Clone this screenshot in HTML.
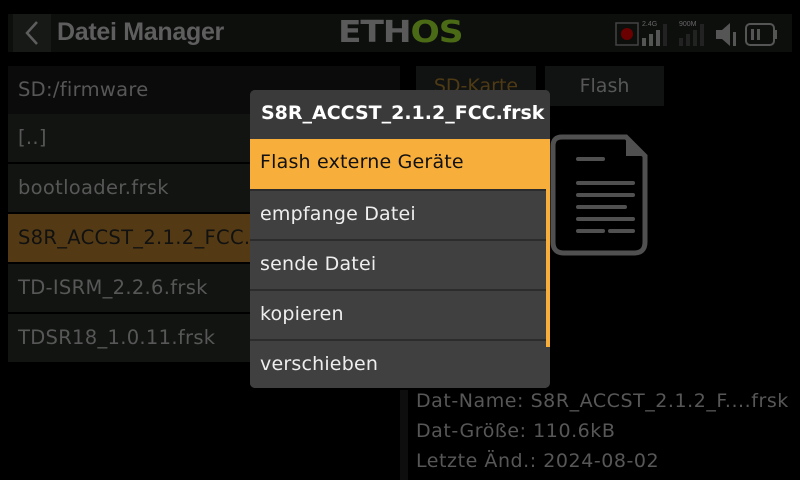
<!DOCTYPE html>
<html><head><meta charset="utf-8"><style>
*{margin:0;padding:0;box-sizing:border-box}
body{width:800px;height:480px;background:#000;position:relative;overflow:hidden;font-family:"DejaVu Sans","Liberation Sans",sans-serif}
.a{position:absolute}
.row{position:absolute;left:8px;width:392px;height:48px;background:#111411;color:#575757;font-size:19.5px;line-height:48px;padding-left:10px;white-space:nowrap;overflow:hidden;letter-spacing:0.3px}
.mi{position:absolute;left:0;width:296px;height:48px;background:#404040;color:#eee;font-size:19px;line-height:46px;padding-left:10px;border-top:2px solid #2c2c2c;letter-spacing:0.2px}
.info{position:absolute;left:416px;color:#575757;font-size:19px;letter-spacing:0.55px}
</style></head><body>
<div class="a" style="left:8px;top:14px;width:784px;height:38px;background:#0d0f0d"></div>
<div class="a" style="left:13px;top:14px;width:38px;height:38px;background:#161916"></div>
<svg class="a" style="left:13px;top:14px" width="38" height="38"><path d="M24 8 L14 19 L24 30" stroke="#5e5e5e" stroke-width="2.5" fill="none"/></svg>
<div class="a" style="left:57px;top:18px;color:#5e5e5e;font-size:25px;font-weight:bold;font-family:'Liberation Sans',sans-serif;letter-spacing:-0.3px">Datei Manager</div>
<div class="a" style="left:338px;top:15px;font-size:30px;font-family:'DejaVu Sans',sans-serif;letter-spacing:-1px;transform:scaleX(1.15);transform-origin:left;font-weight:bold"><span style="color:#5a5a5a">ETH</span><span style="color:#4a6a16">OS</span></div>
<svg class="a" style="left:612px;top:18px" width="180" height="32">
<rect x="4" y="5" width="22" height="22" fill="none" stroke="#444" stroke-width="1.5"/><circle cx="15" cy="16" r="6" fill="#6a0000"/>
<text x="30" y="8" font-size="7" fill="#666" font-family="Liberation Sans">2.4G</text>
<rect x="30" y="20" width="4" height="8" fill="#555"/><rect x="37" y="16" width="4" height="12" fill="#555"/><rect x="44" y="12" width="4" height="16" fill="#555"/><rect x="51" y="6" width="4" height="22" fill="#222"/>
<text x="67" y="8" font-size="7" fill="#666" font-family="Liberation Sans">900M</text>
<rect x="67" y="20" width="4" height="8" fill="#222"/><rect x="74" y="16" width="4" height="12" fill="#222"/><rect x="81" y="12" width="4" height="16" fill="#222"/><rect x="88" y="6" width="4" height="22" fill="#222"/>
<path d="M104 12 L110 12 L118 5 L118 28 L110 21 L104 21 Z" fill="#555"/><rect x="121" y="14" width="3" height="14" fill="#555"/>
<rect x="134" y="6" width="28" height="21" rx="4" fill="none" stroke="#555" stroke-width="2"/><rect x="162" y="12" width="3" height="9" fill="#555"/><rect x="139" y="11" width="3" height="11" fill="#555"/><rect x="145" y="11" width="3" height="11" fill="#555"/>
</svg>
<div class="row" style="top:66px;background:#0a0b0a">SD:/firmware</div>
<div class="row" style="top:114px">[..]</div>
<div class="row" style="top:164px">bootloader.frsk</div>
<div class="row" style="top:214px;background:#533a14;color:#111">S8R_ACCST_2.1.2_FCC.frsk</div>
<div class="row" style="top:264px">TD-ISRM_2.2.6.frsk</div>
<div class="row" style="top:314px">TDSR18_1.0.11.frsk</div>
<div class="a" style="left:416px;top:66px;width:120px;height:40px;background:#101311;color:#4f3a16;font-size:19px;line-height:40px;text-align:center">SD-Karte</div>
<div class="a" style="left:545px;top:66px;width:119px;height:40px;background:#101311;color:#575757;font-size:19px;line-height:40px;text-align:center">Flash</div>
<svg class="a" style="left:550px;top:134px" width="100" height="124"><path d="M12 3 L76 3 L95 22 L95 108 Q95 119 84 119 L14 119 Q3 119 3 108 L3 12 Q3 3 12 3 Z" fill="none" stroke="#505050" stroke-width="5"/><path d="M76 3 L76 22 L95 22 Z" fill="#505050"/>
<g stroke="#505050" stroke-width="4" stroke-linecap="round"><line x1="28" y1="25" x2="53" y2="25"/><line x1="28" y1="49" x2="83" y2="49"/><line x1="28" y1="61" x2="83" y2="61"/><line x1="28" y1="73" x2="75" y2="73"/><line x1="28" y1="85" x2="83" y2="85"/><line x1="28" y1="97" x2="53" y2="97"/><line x1="60" y1="97" x2="83" y2="97"/></g></svg>
<div class="a" style="left:250px;top:90px;width:300px;height:298px;background:#404040;border-radius:5px;overflow:hidden">
<div class="a" style="left:0;top:0;width:300px;height:49px;background:#3a3a3a;color:#fff;font-size:19px;font-weight:bold;line-height:46px;padding-left:11px">S8R_ACCST_2.1.2_FCC.frsk</div>
<div class="mi" style="top:49px;width:300px;background:#f7ae3a;color:#111;border-top:0;height:50px;line-height:46px">Flash externe Geräte</div>
<div class="mi" style="top:99px">empfange Datei</div>
<div class="mi" style="top:149px">sende Datei</div>
<div class="mi" style="top:199px">kopieren</div>
<div class="mi" style="top:249px;height:49px">verschieben</div>
<div class="a" style="left:296px;top:99px;width:4px;height:158px;background:#f7ae3a"></div>
</div>
<div class="a" style="left:400px;top:390px;width:8px;height:90px;background:#0e0e0e"></div>
<div class="info" style="top:390px">Dat-Name: S8R_ACCST_2.1.2_F....frsk</div>
<div class="info" style="top:420px">Dat-Größe: 110.6kB</div>
<div class="info" style="top:450px">Letzte Änd.: 2024-08-02</div>
</body></html>
